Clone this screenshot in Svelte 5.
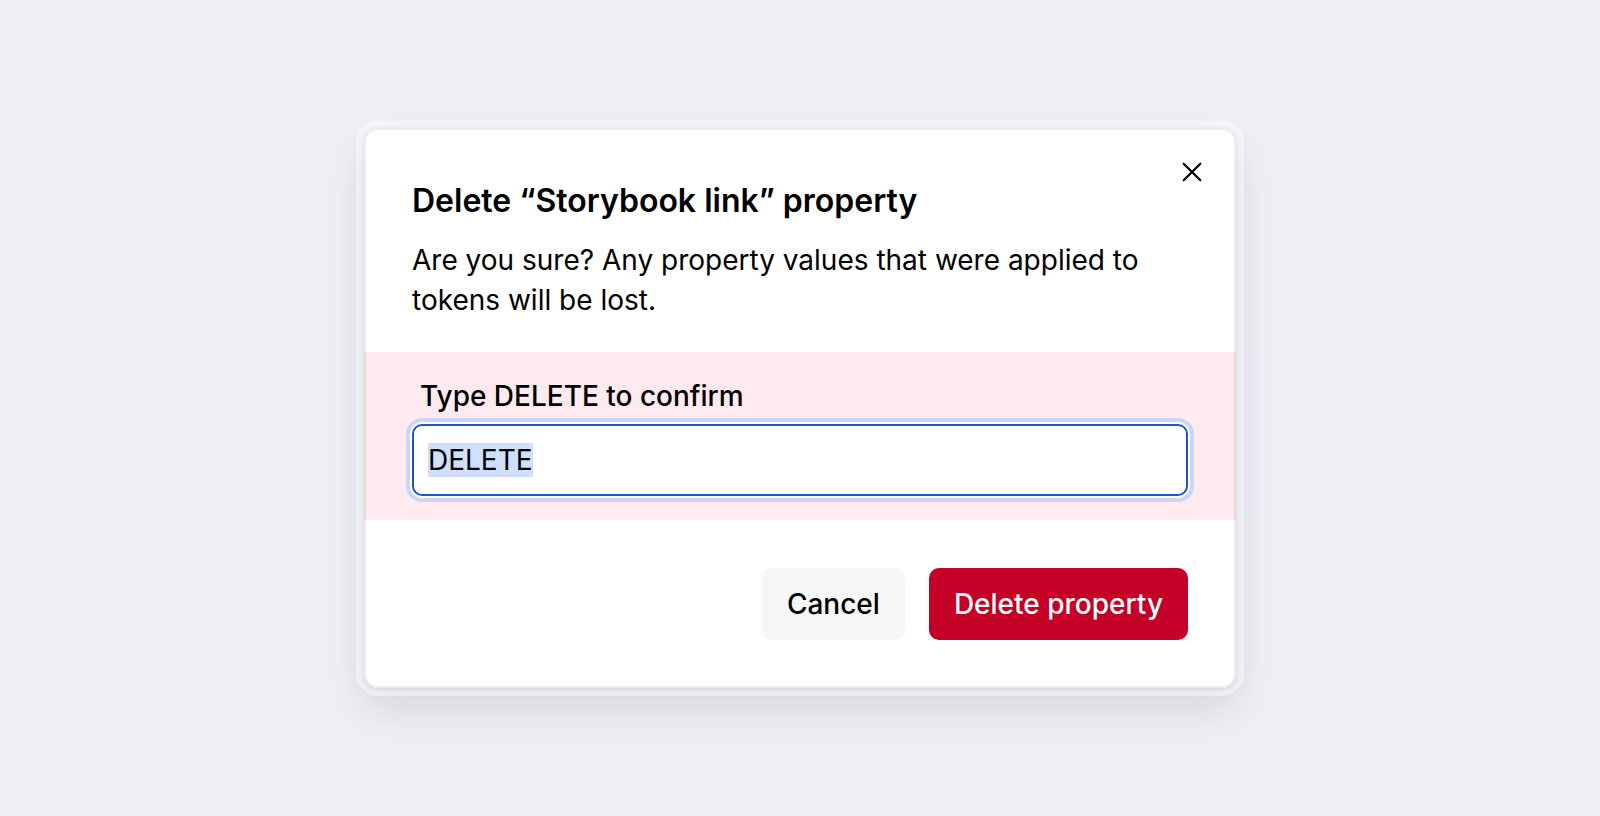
<script lang="ts">
	import { onMount } from 'svelte';

	interface Props {
		property?: string;
		keyword?: string;
	}

	let { property = 'Storybook link', keyword = 'DELETE' }: Props = $props();
	let value = $state('DELETE');
	let open = $state(true);
	let input: HTMLInputElement;

	function close() {
		open = false;
	}

	function submit(event: SubmitEvent) {
		event.preventDefault();
		if (value === keyword) close();
	}

	onMount(() => {
		input.focus();
		input.select();
	});
</script>

<main>
	{#if open}
		<form class="dialog" role="dialog" aria-labelledby="dialog-title" onsubmit={submit}>
			<button class="close" type="button" aria-label="Close" onclick={close}>
				<svg width="20" height="20" viewBox="0 0 20 20" fill="none" aria-hidden="true">
					<path d="M1.7 1.7 18.3 18.3M18.3 1.7 1.7 18.3" stroke="currentColor" stroke-width="2.2" stroke-linecap="round" />
				</svg>
			</button>

			<header>
				<h1 id="dialog-title">Delete “{property}” property</h1>
				<p>Are you sure? Any property values that were applied to tokens will be lost.</p>
			</header>

			<div class="confirm">
				<label for="confirm-input">Type {keyword} to confirm</label>
				<input
					id="confirm-input"
					type="text"
					autocomplete="off"
					spellcheck="false"
					bind:this={input}
					bind:value />
			</div>

			<footer>
				<button class="button" type="button" onclick={close}>Cancel</button>
				<button class="button danger" type="submit">Delete property</button>
			</footer>
		</form>
	{/if}
</main>

<style>
	:global(body) {
		background: #eef0f5;
	}

	main {
		display: grid;
		justify-items: center;
		align-items: center;
		min-height: 100vh;
		padding: 24px;
		box-sizing: border-box;
		color: #000;
		font-family: Inter, 'Liberation Sans', sans-serif;
		font-size: 28px;
		line-height: 40px;
	}

	.dialog {
		position: relative;
		width: 100%;
		max-width: 872px;
		background: #fff;
		border-radius: 14px;
		outline: 2px solid rgba(0, 0, 0, 0.07);
		outline-offset: -2px;
		box-shadow:
			0 1px 4px rgba(0, 0, 0, 0.1),
			0 0 0 8px rgba(255, 255, 255, 0.4),
			0 20px 48px rgba(0, 0, 0, 0.12);
	}

	.close {
		position: absolute;
		top: 20px;
		right: 20px;
		display: grid;
		place-items: center;
		width: 48px;
		height: 48px;
		padding: 0;
		border: 0;
		border-radius: 8px;
		background: transparent;
		color: #000;
		cursor: pointer;
	}

	header {
		padding: 48px 48px 32px;
	}

	h1 {
		margin: 0 0 14px;
		font-size: 32px;
		font-weight: 600;
		line-height: 50px;
	}

	p {
		margin: 0;
	}

	.confirm {
		display: flex;
		flex-direction: column;
		gap: 8px;
		padding: 24px 48px;
		background: #ffebef;
	}

	label {
		padding: 0 8px;
		font-weight: 500;
	}

	input {
		width: 100%;
		height: 72px;
		padding: 14px;
		box-sizing: border-box;
		border: 2px solid #1a56d0;
		border-radius: 10px;
		background: #fff;
		color: #000;
		font: inherit;
		outline: none;
		box-shadow:
			0 0 0 2px #fff,
			0 0 0 6px #ccd5f5;
	}

	input::selection {
		background: #cfdffe;
		color: #000;
	}

	footer {
		display: flex;
		justify-content: flex-end;
		gap: 24px;
		padding: 48px;
	}

	.button {
		padding: 16px 25px;
		border: 0;
		border-radius: 10px;
		background: #f6f6f6;
		color: #000;
		font: inherit;
		font-weight: 500;
		cursor: pointer;
	}

	.danger {
		background: #c40026;
		color: #fff;
	}
</style>
